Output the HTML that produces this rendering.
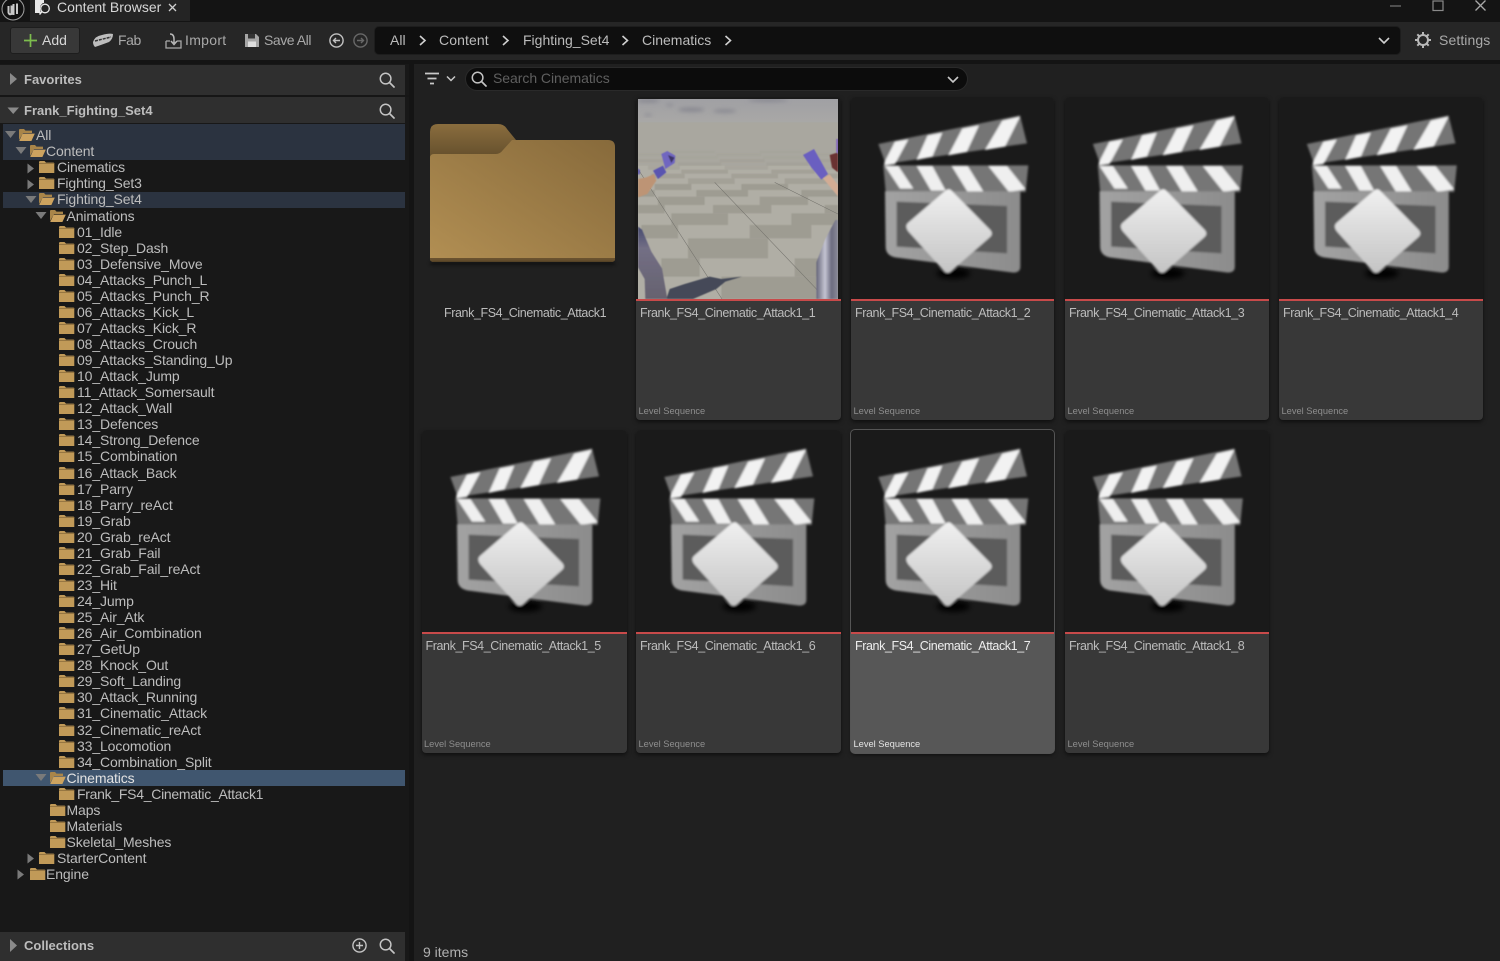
<!DOCTYPE html>
<html><head><meta charset="utf-8"><title>Content Browser</title>
<style>
*{box-sizing:border-box}
html,body{margin:0;padding:0;width:1500px;height:961px;overflow:hidden;background:#202020;font-family:"Liberation Sans",sans-serif;color:#c0c0c0}
.a{position:absolute}
.t{position:absolute;white-space:nowrap;font-size:14px;line-height:16px}
svg{position:absolute;overflow:visible}
#tree{position:absolute;left:0;top:127.2px;width:405px}
.r{position:relative;height:16.07px;white-space:nowrap;font-size:14px;line-height:16px;color:#bdbdbd;letter-spacing:-.12px}
.r span{position:absolute;top:0}
.r svg{top:1px;width:17px;height:14px}
.hd{position:absolute;left:0;width:405px;background:#2f2f2f}
.card{position:absolute;width:205px;height:323px;background:#383838;border-radius:4px;box-shadow:0 2px 4px rgba(0,0,0,.55)}
.th{position:absolute;left:0;top:0;width:100%;height:204px;background:#1a1a1a;border-radius:4px 4px 0 0;border-bottom:2.5px solid #c84a4a}
.th svg{left:0;top:0;width:100%;height:202px}
.n{position:absolute;left:4px;top:208px;font-size:12.5px;line-height:16px;color:#bcbcbc;white-space:nowrap;letter-spacing:-.4px}
.l{position:absolute;left:2.5px;top:308px;font-size:9.3px;line-height:13px;color:#8e8e8e;white-space:nowrap}
.sel{background:#575757}.sel .n{color:#eee}.sel .l{color:#e4e4e4}
.b{font-weight:bold;font-size:13px;color:#bdbdbd}
</style></head><body>
<svg width="0" height="0" style="position:absolute">
<defs>
<symbol id="fc" viewBox="0 0 17 14"><path d="M1 2.2Q1 1 2.2 1H6.5L8 2.6H15.5Q16.3 2.6 16.3 3.5V13H1Z" fill="#c19a58"/><path d="M1 3.6H16.3" stroke="#8b6d3c" stroke-width=".8"/></symbol>
<symbol id="fo" viewBox="0 0 17 14"><path d="M1 13V2Q1 1 2 1H6L7.5 2.6H14V5H5L1 12Z" fill="#a98549"/><path d="M1.2 13L4.6 5.6H16.8L13.4 13Z" fill="#cda35f"/></symbol>
<symbol id="cl" viewBox="18 21 609 606">
<defs>
<linearGradient id="dg" x1="0" y1="0" x2="0" y2="1"><stop offset="0" stop-color="#f0f0f0"/><stop offset="1" stop-color="#c4c4c4"/></linearGradient>
<linearGradient id="bg" x1="0" y1="0" x2="1" y2="0"><stop offset="0" stop-color="#a2a2a2"/><stop offset="1" stop-color="#8c8c8c"/></linearGradient>
<filter id="b1" x="-10%" y="-10%" width="120%" height="120%"><feGaussianBlur stdDeviation="3.2"/></filter>
<filter id="b2" x="-30%" y="-30%" width="160%" height="160%"><feGaussianBlur stdDeviation="8"/></filter>
</defs>
<g filter="url(#b1)">
<ellipse cx="325" cy="550" rx="50" ry="16" fill="#000" filter="url(#b2)"/>
<path d="M100 162L525 76L546 160L122 222Z" fill="#747474"/>
<path d="M150 155L190 148L150 222L118 226L118 218ZM248 136L292 128L262 200L215 210ZM352 116L402 106L365 186L310 196ZM472 92L525 80L480 170L420 180Z" fill="#f2f2f2"/>
<path d="M115 226H550L542 306H122Z" fill="#767676"/>
<path d="M120 228H160L205 296H165ZM215 228H262L302 302H258ZM320 228H368L416 306H368ZM430 228H486L542 298L492 306Z" fill="#efefef"/>
<path d="M120 304H526V530Q526 548 505 548L150 502Q122 496 122 470Z" fill="url(#bg)"/>
<path d="M155 335L486 348V490L155 470Z" fill="#5c5c5c"/>
<path d="M300 303Q311 292 322 304L436 420Q446 432 434 442L318 544Q306 554 296 542L190 424Q178 408 190 398Z" fill="url(#dg)"/>
</g>
</symbol>
<symbol id="mg" viewBox="0 0 16 16"><circle cx="6.6" cy="6.6" r="5.3" fill="none" stroke="#c4c4c4" stroke-width="1.5"/><path d="M10.5 10.5L15 15" stroke="#c4c4c4" stroke-width="1.7" stroke-linecap="round"/></symbol>
</defs>
</svg>

<!-- title bar -->
<div class="a" style="left:0;top:0;width:1500px;height:22px;background:#141414"></div>
<div class="a" style="left:30px;top:0;width:160px;height:21px;background:#242424"></div>
<svg style="left:1px;top:-3px" width="24" height="24" viewBox="0 0 24 24"><circle cx="12" cy="12" r="11" fill="#111" stroke="#a0a0a0" stroke-width="1"/><path d="M7.5 9V15.5Q8 18 10.5 17V8.5M12.5 7V18M16 6.5V17" fill="none" stroke="#c8c8c8" stroke-width="2"/></svg>
<svg style="left:34px;top:0" width="17" height="15" viewBox="0 0 17 15"><path d="M1 0H10V3H9Q6 5 6 8.500Q6 11 7 13H1Z" fill="#e8e8e8"/><circle cx="11" cy="8.500" r="4.300" fill="#242424" stroke="#e8e8e8" stroke-width="1.300"/><path d="M8 11.500L5.500 14.500" stroke="#e8e8e8" stroke-width="1.500"/></svg>
<div class="t" style="left:57px;top:-1px;color:#d8d8d8">Content Browser</div>
<svg style="left:168px;top:3px" width="9" height="9"><path d="M1 1L8 8M8 1L1 8" stroke="#cfcfcf" stroke-width="1.3"/></svg>
<svg style="left:1390px;top:0" width="100" height="12"><path d="M0 6H11" stroke="#777" stroke-width="1.2"/><rect x="43" y="1" width="10" height="9.5" fill="none" stroke="#8a8a8a" stroke-width="1.2"/><path d="M85.5 0.5L95.5 10.5M95.5 0.5L85.5 10.5" stroke="#a8a8a8" stroke-width="1.3"/></svg>

<!-- toolbar -->
<div class="a" style="left:0;top:22px;width:1500px;height:38px;background:#262626"></div>
<div class="a" style="left:0;top:60px;width:1500px;height:4px;background:#141414"></div>
<div class="a" style="left:10px;top:27px;width:70px;height:27px;background:#383838;border-radius:3px;border:1px solid #1d1d1d"></div>
<svg style="left:23px;top:33px" width="15" height="15"><path d="M7.5 1V14M1 7.5H14" stroke="#7dbd4e" stroke-width="1.7"/></svg>
<div class="t" style="left:42px;top:32px;color:#d6d6d6">Add</div>
<svg style="left:93px;top:33px" width="21" height="15" viewBox="0 0 21 15"><path d="M0 9Q2 3 9 2Q16 0 20 1Q20 6 16 9Q8 12 2 14Q0 12 0 9Z" fill="#bdbdbd"/><path d="M2 8L18 4" stroke="#333" stroke-width="1.5" stroke-dasharray="3 1"/></svg>
<div class="t" style="left:118px;top:32px;color:#a9a9a9;letter-spacing:-.4px">Fab</div>
<svg style="left:165px;top:33px" width="17" height="16" viewBox="0 0 17 16"><path d="M1 8V15H16V8H12M5 8H1" fill="none" stroke="#a9a9a9" stroke-width="1.3"/><path d="M5 1Q9 1 9 6V10M6 8L9 11.5L12 8" fill="none" stroke="#b8b8b8" stroke-width="1.5"/></svg>
<div class="t" style="left:185px;top:32px;color:#a9a9a9;letter-spacing:.3px">Import</div>
<svg style="left:245px;top:33px" width="15" height="15" viewBox="0 0 15 15"><path d="M0 1H11L14 4V14H0Z" fill="#a5a5a5"/><rect x="3" y="1" width="7" height="4.5" fill="#333"/><rect x="3" y="8.5" width="8" height="5.5" fill="#ddd"/></svg>
<div class="t" style="left:264px;top:32px;color:#a9a9a9;letter-spacing:-.45px">Save All</div>
<svg style="left:329px;top:33px" width="40" height="15" viewBox="0 0 40 15"><circle cx="7.5" cy="7.5" r="6.6" fill="none" stroke="#c2c2c2" stroke-width="1.4"/><path d="M11 7.5H4.5M7 5L4.5 7.5L7 10" fill="none" stroke="#c2c2c2" stroke-width="1.4"/><circle cx="31.5" cy="7.5" r="6.6" fill="none" stroke="#686868" stroke-width="1.4"/><path d="M28 7.5H34.5M32 5L34.5 7.5L32 10" fill="none" stroke="#686868" stroke-width="1.4"/></svg>
<div class="a" style="left:375px;top:27px;width:1025px;height:27px;background:#0f0f0f;border-radius:4px;box-shadow:0 0 0 1px #1d1d1d"></div>
<div class="t" style="left:390px;top:32px;color:#bcbcbc">All</div>
<div class="t" style="left:439px;top:32px;color:#bcbcbc;letter-spacing:.1px">Content</div>
<div class="t" style="left:523px;top:32px;color:#bcbcbc">Fighting_Set4</div>
<div class="t" style="left:642px;top:32px;color:#bcbcbc">Cinematics</div>
<svg style="left:0;top:0" width="1500" height="60"><g fill="none" stroke="#d0d0d0" stroke-width="1.6"><path d="M420 36L425 40.5L420 45M503 36L508 40.5L503 45M622.500 36L627.500 40.500L622.500 45M725.500 36L730.500 40.500L725.500 45"/><path d="M1379 38L1384 43L1389 38"/></g></svg>
<svg style="left:1415px;top:32px" width="16" height="16" viewBox="0 0 16 16"><circle cx="8" cy="8" r="5" fill="none" stroke="#b8b8b8" stroke-width="2"/><path d="M8 0V3M8 13V16M0 8H3M13 8H16M2.300 2.300L4.500 4.500M11.500 11.500L13.700 13.700M13.700 2.300L11.500 4.500M4.500 11.500L2.300 13.700" stroke="#b8b8b8" stroke-width="2"/></svg>
<div class="t" style="left:1439px;top:32px;color:#a9a9a9;letter-spacing:.1px">Settings</div>

<!-- left panel -->
<div class="a" style="left:0;top:64px;width:409px;height:897px;background:#181818"></div>
<div class="a" style="left:409px;top:64px;width:5px;height:897px;background:#141414"></div>
<div class="hd" style="top:65px;height:30px"></div>
<div class="a" style="left:0;top:95px;width:409px;height:2px;background:#161616"></div>
<div class="hd" style="top:97px;height:26px"></div>
<div class="hd" style="top:932px;height:29px"></div>
<div class="t b" style="left:24px;top:72px">Favorites</div>
<div class="t b" style="left:24px;top:103px">Frank_Fighting_Set4</div>
<div class="t b" style="left:24px;top:938px">Collections</div>
<svg style="left:0;top:0" width="30" height="961"><path d="M10 73L17 79L10 85Z" fill="#8a8a8a"/><path d="M7.500 107.500H19L13.200 114Z" fill="#8a8a8a"/><path d="M10 939L17 945.500L10 952Z" fill="#8a8a8a"/></svg>
<svg style="left:379px;top:72px" width="16" height="16"><use href="#mg"/></svg>
<svg style="left:379px;top:103px" width="16" height="16"><use href="#mg"/></svg>
<svg style="left:379px;top:938px" width="16" height="16"><use href="#mg"/></svg>
<svg style="left:352px;top:938px" width="16" height="16"><circle cx="7.500" cy="7.500" r="6.600" fill="none" stroke="#c4c4c4" stroke-width="1.400"/><path d="M7.500 4V11M4 7.500H11" stroke="#c4c4c4" stroke-width="1.400"/></svg>

<!-- selections -->
<div class="a" style="left:3px;top:124px;width:402px;height:36px;background:#2b3340"></div>
<div class="a" style="left:3px;top:192px;width:402px;height:16px;background:#2b3340"></div>
<div class="a" style="left:3px;top:770px;width:402px;height:16px;background:#40566f"></div>

<!-- tree -->
<div id="tree">
<div class="r"><svg style="left:18px" viewBox="0 0 17 14"><use href="#fo"/></svg><span style="left:36px">All</span></div>
<div class="r"><svg style="left:28.500px" viewBox="0 0 17 14"><use href="#fo"/></svg><span style="left:46px">Content</span></div>
<div class="r"><svg style="left:38px" viewBox="0 0 17 14"><use href="#fc"/></svg><span style="left:57px">Cinematics</span></div>
<div class="r"><svg style="left:38px" viewBox="0 0 17 14"><use href="#fc"/></svg><span style="left:57px">Fighting_Set3</span></div>
<div class="r"><svg style="left:38px" viewBox="0 0 17 14"><use href="#fo"/></svg><span style="left:57px">Fighting_Set4</span></div>
<div class="r"><svg style="left:48.500px" viewBox="0 0 17 14"><use href="#fo"/></svg><span style="left:66.500px">Animations</span></div>
<div class="r"><svg style="left:58px" viewBox="0 0 17 14"><use href="#fc"/></svg><span style="left:77px">01_Idle</span></div>
<div class="r"><svg style="left:58px" viewBox="0 0 17 14"><use href="#fc"/></svg><span style="left:77px">02_Step_Dash</span></div>
<div class="r"><svg style="left:58px" viewBox="0 0 17 14"><use href="#fc"/></svg><span style="left:77px">03_Defensive_Move</span></div>
<div class="r"><svg style="left:58px" viewBox="0 0 17 14"><use href="#fc"/></svg><span style="left:77px">04_Attacks_Punch_L</span></div>
<div class="r"><svg style="left:58px" viewBox="0 0 17 14"><use href="#fc"/></svg><span style="left:77px">05_Attacks_Punch_R</span></div>
<div class="r"><svg style="left:58px" viewBox="0 0 17 14"><use href="#fc"/></svg><span style="left:77px">06_Attacks_Kick_L</span></div>
<div class="r"><svg style="left:58px" viewBox="0 0 17 14"><use href="#fc"/></svg><span style="left:77px">07_Attacks_Kick_R</span></div>
<div class="r"><svg style="left:58px" viewBox="0 0 17 14"><use href="#fc"/></svg><span style="left:77px">08_Attacks_Crouch</span></div>
<div class="r"><svg style="left:58px" viewBox="0 0 17 14"><use href="#fc"/></svg><span style="left:77px">09_Attacks_Standing_Up</span></div>
<div class="r"><svg style="left:58px" viewBox="0 0 17 14"><use href="#fc"/></svg><span style="left:77px">10_Attack_Jump</span></div>
<div class="r"><svg style="left:58px" viewBox="0 0 17 14"><use href="#fc"/></svg><span style="left:77px">11_Attack_Somersault</span></div>
<div class="r"><svg style="left:58px" viewBox="0 0 17 14"><use href="#fc"/></svg><span style="left:77px">12_Attack_Wall</span></div>
<div class="r"><svg style="left:58px" viewBox="0 0 17 14"><use href="#fc"/></svg><span style="left:77px">13_Defences</span></div>
<div class="r"><svg style="left:58px" viewBox="0 0 17 14"><use href="#fc"/></svg><span style="left:77px">14_Strong_Defence</span></div>
<div class="r"><svg style="left:58px" viewBox="0 0 17 14"><use href="#fc"/></svg><span style="left:77px">15_Combination</span></div>
<div class="r"><svg style="left:58px" viewBox="0 0 17 14"><use href="#fc"/></svg><span style="left:77px">16_Attack_Back</span></div>
<div class="r"><svg style="left:58px" viewBox="0 0 17 14"><use href="#fc"/></svg><span style="left:77px">17_Parry</span></div>
<div class="r"><svg style="left:58px" viewBox="0 0 17 14"><use href="#fc"/></svg><span style="left:77px">18_Parry_reAct</span></div>
<div class="r"><svg style="left:58px" viewBox="0 0 17 14"><use href="#fc"/></svg><span style="left:77px">19_Grab</span></div>
<div class="r"><svg style="left:58px" viewBox="0 0 17 14"><use href="#fc"/></svg><span style="left:77px">20_Grab_reAct</span></div>
<div class="r"><svg style="left:58px" viewBox="0 0 17 14"><use href="#fc"/></svg><span style="left:77px">21_Grab_Fail</span></div>
<div class="r"><svg style="left:58px" viewBox="0 0 17 14"><use href="#fc"/></svg><span style="left:77px">22_Grab_Fail_reAct</span></div>
<div class="r"><svg style="left:58px" viewBox="0 0 17 14"><use href="#fc"/></svg><span style="left:77px">23_Hit</span></div>
<div class="r"><svg style="left:58px" viewBox="0 0 17 14"><use href="#fc"/></svg><span style="left:77px">24_Jump</span></div>
<div class="r"><svg style="left:58px" viewBox="0 0 17 14"><use href="#fc"/></svg><span style="left:77px">25_Air_Atk</span></div>
<div class="r"><svg style="left:58px" viewBox="0 0 17 14"><use href="#fc"/></svg><span style="left:77px">26_Air_Combination</span></div>
<div class="r"><svg style="left:58px" viewBox="0 0 17 14"><use href="#fc"/></svg><span style="left:77px">27_GetUp</span></div>
<div class="r"><svg style="left:58px" viewBox="0 0 17 14"><use href="#fc"/></svg><span style="left:77px">28_Knock_Out</span></div>
<div class="r"><svg style="left:58px" viewBox="0 0 17 14"><use href="#fc"/></svg><span style="left:77px">29_Soft_Landing</span></div>
<div class="r"><svg style="left:58px" viewBox="0 0 17 14"><use href="#fc"/></svg><span style="left:77px">30_Attack_Running</span></div>
<div class="r"><svg style="left:58px" viewBox="0 0 17 14"><use href="#fc"/></svg><span style="left:77px">31_Cinematic_Attack</span></div>
<div class="r"><svg style="left:58px" viewBox="0 0 17 14"><use href="#fc"/></svg><span style="left:77px">32_Cinematic_reAct</span></div>
<div class="r"><svg style="left:58px" viewBox="0 0 17 14"><use href="#fc"/></svg><span style="left:77px">33_Locomotion</span></div>
<div class="r"><svg style="left:58px" viewBox="0 0 17 14"><use href="#fc"/></svg><span style="left:77px">34_Combination_Split</span></div>
<div class="r" style="color:#e2e2e2"><svg style="left:48.500px" viewBox="0 0 17 14"><use href="#fo"/></svg><span style="left:66.500px">Cinematics</span></div>
<div class="r"><svg style="left:58px" viewBox="0 0 17 14"><use href="#fc"/></svg><span style="left:77px;letter-spacing:-.28px">Frank_FS4_Cinematic_Attack1</span></div>
<div class="r"><svg style="left:48.500px" viewBox="0 0 17 14"><use href="#fc"/></svg><span style="left:66.500px">Maps</span></div>
<div class="r"><svg style="left:48.500px" viewBox="0 0 17 14"><use href="#fc"/></svg><span style="left:66.500px">Materials</span></div>
<div class="r"><svg style="left:48.500px" viewBox="0 0 17 14"><use href="#fc"/></svg><span style="left:66.500px">Skeletal_Meshes</span></div>
<div class="r"><svg style="left:38px" viewBox="0 0 17 14"><use href="#fc"/></svg><span style="left:57px">StarterContent</span></div>
<div class="r"><svg style="left:28.500px" viewBox="0 0 17 14"><use href="#fc"/></svg><span style="left:46px">Engine</span></div>
</div>
<svg style="left:0;top:0" width="60" height="961"><g fill="#7a7a7a">
<path d="M5 131H16L10.500 138Z"/><path d="M15.500 147H26.500L21 154Z"/><path d="M27.500 163.500L34 168.500L27.500 173.500Z"/><path d="M27.500 179.500L34 184.500L27.500 189.500Z"/><path d="M25.500 196H36.500L31 203Z"/><path d="M35.500 212H46.500L41 219Z"/><path d="M35.500 774H46.500L41 781Z"/><path d="M27.500 853.500L34 858.500L27.500 863.500Z"/><path d="M17.500 869.500L24 874.500L17.500 879.500Z"/></g></svg>

<!-- search bar -->
<svg style="left:424px;top:72px" width="34" height="14" viewBox="0 0 34 14"><path d="M1 1.500H15M3.500 6.500H12.500M6 11.500H10" stroke="#c8c8c8" stroke-width="1.700"/><path d="M23 4.500L27 8.500L31 4.500" fill="none" stroke="#c8c8c8" stroke-width="1.500"/></svg>
<div class="a" style="left:466px;top:68px;width:501px;height:22px;background:#0c0c0c;border-radius:11px;box-shadow:0 0 0 1px #2a2a2a"></div>
<svg style="left:471px;top:71px" width="16" height="16"><use href="#mg"/></svg>
<div class="t" style="left:493px;top:70px;color:#5f5f5f;letter-spacing:-.05px">Search Cinematics</div>
<svg style="left:947px;top:75px" width="12" height="9"><path d="M1 2L6 7L11 2" fill="none" stroke="#c8c8c8" stroke-width="1.600"/></svg>

<!-- folder -->
<svg style="left:428px;top:122px" width="190" height="144" viewBox="0 0 190 144">
<defs>
<linearGradient id="f1" x1="0" y1="1" x2="1" y2="0"><stop offset="0" stop-color="#b28f53"/><stop offset="1" stop-color="#876a3b"/></linearGradient>
<linearGradient id="f2" x1="0" y1="0" x2="0" y2="1"><stop offset="0" stop-color="#8a6d3e"/><stop offset="1" stop-color="#5f4b2a"/></linearGradient>
</defs>
<path d="M2 40V10Q2 2 10 2H70Q76 2 79 7L88 18H100V40Z" fill="url(#f2)"/>
<path d="M2 136V36Q2 32 6 32H68Q72 32 75 28L84 18H180Q187 18 187 25V136Q187 140 183 140H6Q2 140 2 136Z" fill="url(#f1)"/>
<path d="M2 136H187V137Q187 140 183 140H6Q2 140 2 137Z" fill="#6b5330"/>
</svg>
<div class="a" style="left:430px;top:262px;width:185px;height:3px;background:rgba(0,0,0,.5);filter:blur(1.500px)"></div>
<div class="a" style="left:444px;top:305px;font-size:12.5px;line-height:16px;color:#bcbcbc;white-space:nowrap;letter-spacing:-.4px">Frank_FS4_Cinematic_Attack1</div>

<!-- card 1 with photo -->
<div class="card" style="left:636px;top:97px"><div class="th"></div><div class="n">Frank_FS4_Cinematic_Attack1_1</div><div class="l">Level Sequence</div></div>
<div class="a" style="left:638px;top:99px;width:200px;height:200px;overflow:hidden;background:#a8a69f">
 <svg style="left:0;top:0;overflow:hidden" width="200" height="200" viewBox="0 0 600 600">
  <defs><filter id="p"><feGaussianBlur stdDeviation="1.800"/></filter><filter id="q"><feGaussianBlur stdDeviation="6"/></filter><filter id="w"><feGaussianBlur stdDeviation="1.200"/></filter>
  <linearGradient id="sk" x1="0" y1="0" x2="0" y2="1"><stop offset="0" stop-color="#a0a0a4"/><stop offset="1" stop-color="#a9a8a6"/></linearGradient>
  <linearGradient id="mt" x1="0" y1="0" x2="1" y2="0"><stop offset="0" stop-color="#66667a"/><stop offset=".4" stop-color="#c4c4d2"/><stop offset=".7" stop-color="#6c6c80"/><stop offset="1" stop-color="#8a8a98"/></linearGradient>
  <linearGradient id="lg" x1="0" y1="0" x2="0" y2="1"><stop offset="0" stop-color="#464a70"/><stop offset=".3" stop-color="#736f85"/><stop offset="1" stop-color="#66626f"/></linearGradient></defs>
  <rect x="0" y="0" width="600" height="72" fill="url(#sk)"/>
  <rect x="0" y="70" width="600" height="130" fill="#a9a79f"/>
  <rect x="0" y="200" width="600" height="400" fill="#b0aea5"/>
  <g filter="url(#w)">
  <g fill="#9e9c92">
  <rect x="250" y="533" width="285" height="67"/>
  <rect x="70" y="478" width="115" height="55"/><rect x="470" y="478" width="130" height="55"/>
  <rect x="150" y="418" width="240" height="60"/>
  <rect x="10" y="378" width="110" height="40"/><rect x="335" y="378" width="185" height="40"/>
  <rect x="100" y="343" width="170" height="35"/><rect x="460" y="343" width="140" height="35"/>
  <rect x="0" y="318" width="80" height="25"/><rect x="225" y="318" width="175" height="25"/><rect x="560" y="318" width="40" height="25"/>
  <rect x="60" y="293" width="140" height="25"/><rect x="365" y="293" width="145" height="25"/>
  <rect x="0" y="273" width="50" height="20"/><rect x="175" y="273" width="155" height="20"/><rect x="490" y="273" width="110" height="20"/>
  <rect x="50" y="255" width="110" height="18"/><rect x="310" y="255" width="140" height="18"/>
  </g>
  <g fill="#a09e94" opacity=".8">
  <rect x="150" y="238" width="140" height="17"/><rect x="440" y="238" width="130" height="17"/>
  <rect x="40" y="224" width="100" height="14"/><rect x="280" y="224" width="140" height="14"/><rect x="550" y="224" width="50" height="14"/>
  <rect x="130" y="212" width="140" height="12"/><rect x="400" y="212" width="130" height="12"/>
  </g>
  <g fill="#a09e94" opacity=".5">
  <rect x="30" y="200" width="95" height="12"/><rect x="260" y="200" width="130" height="12"/><rect x="520" y="200" width="80" height="12"/>
  <rect x="120" y="190" width="130" height="10"/><rect x="385" y="190" width="125" height="10"/>
  <rect x="0" y="180" width="115" height="10"/><rect x="245" y="180" width="135" height="10"/><rect x="505" y="180" width="95" height="10"/>
  </g>
  <g fill="#a09e94" opacity=".3">
  <rect x="110" y="171" width="130" height="9"/><rect x="375" y="171" width="125" height="9"/>
  <rect x="0" y="163" width="105" height="8"/><rect x="235" y="163" width="135" height="8"/><rect x="495" y="163" width="105" height="8"/>
  <rect x="100" y="155" width="130" height="8"/><rect x="365" y="155" width="125" height="8"/>
  </g>
  </g>
  <g filter="url(#q)" fill="#85858e"><ellipse cx="30" cy="5" rx="35" ry="5"/><ellipse cx="160" cy="32" rx="40" ry="6"/><ellipse cx="260" cy="36" rx="35" ry="5"/><ellipse cx="390" cy="3" rx="60" ry="5"/><ellipse cx="30" cy="48" rx="12" ry="3"/><ellipse cx="95" cy="18" rx="12" ry="3"/></g>
  <g stroke="#72716b" stroke-width="1.600" fill="none"><path d="M5 218L252 600M230 250L540 575M410 250L600 345"/></g>
  <g filter="url(#p)">
  <path d="M85 600L95 570L140 555L215 533L250 540L312 533L262 548L235 570L165 600Z" fill="#454a58"/>
  <path d="M0 383L12 392L40 458L72 508L88 600H22L20 540L0 505Z" fill="url(#lg)"/>
  <path d="M0 240L25 235L48 225L55 245L28 285L0 295Z" fill="#bd9474"/>
  <path d="M45 215L75 200L85 220L60 240Z" fill="#5a54b0"/>
  <path d="M70 165L88 156L112 170L110 192L82 210Z" fill="#7066c0"/><path d="M90 168L110 176L100 192Z" fill="#3c3468"/>
  <path d="M0 208L6 214L5 226L0 226Z" fill="#5a54b0"/>
  <path d="M495 168L528 150L570 225L550 242L520 205Z" fill="#6a5fc0"/>
  <path d="M575 168L600 160V220L582 206Z" fill="#6a3330"/>
  <path d="M595 120H600V165L595 158Z" fill="#7a5ac0"/>
  <path d="M555 238L575 226L600 258V292Z" fill="#d2ac94"/>
  <path d="M592 363H600V600H535V490L562 420Z" fill="url(#mt)"/>
  </g>
 </svg>
</div>

<!-- cards -->
<div class="card" style="left:851px;top:97px;width:203px"><div class="th"><svg viewBox="0 0 203 202"><use href="#cl" width="203" height="202"/></svg></div><div class="n">Frank_FS4_Cinematic_Attack1_2</div><div class="l">Level Sequence</div></div>
<div class="card" style="left:1065px;top:97px;width:204px"><div class="th"><svg viewBox="0 0 203 202"><use href="#cl" width="203" height="202"/></svg></div><div class="n">Frank_FS4_Cinematic_Attack1_3</div><div class="l">Level Sequence</div></div>
<div class="card" style="left:1279px;top:97px;width:204px"><div class="th"><svg viewBox="0 0 203 202"><use href="#cl" width="203" height="202"/></svg></div><div class="n">Frank_FS4_Cinematic_Attack1_4</div><div class="l">Level Sequence</div></div>
<div class="card" style="left:421.5px;top:430px"><div class="th"><svg viewBox="0 0 203 202"><use href="#cl" width="203" height="202"/></svg></div><div class="n">Frank_FS4_Cinematic_Attack1_5</div><div class="l">Level Sequence</div></div>
<div class="card" style="left:636px;top:430px"><div class="th"><svg viewBox="0 0 203 202"><use href="#cl" width="203" height="202"/></svg></div><div class="n">Frank_FS4_Cinematic_Attack1_6</div><div class="l">Level Sequence</div></div>
<div class="card sel" style="left:851px;top:430px;width:203px;box-shadow:0 0 0 1px #555,0 2px 4px rgba(0,0,0,.55)"><div class="th"><svg viewBox="0 0 203 202"><use href="#cl" width="203" height="202"/></svg></div><div class="n">Frank_FS4_Cinematic_Attack1_7</div><div class="l">Level Sequence</div></div>
<div class="card" style="left:1065px;top:430px;width:204px"><div class="th"><svg viewBox="0 0 203 202"><use href="#cl" width="203" height="202"/></svg></div><div class="n">Frank_FS4_Cinematic_Attack1_8</div><div class="l">Level Sequence</div></div>

<div class="t" style="left:423px;top:944px;color:#b0b0b0">9 items</div>
</body></html>
